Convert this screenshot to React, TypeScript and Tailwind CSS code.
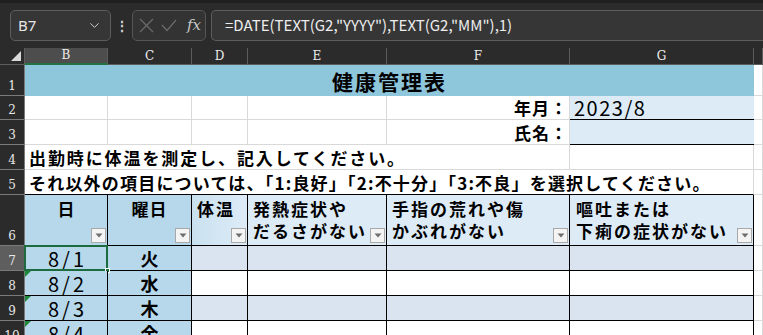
import { Fragment } from 'react'
import { ChevronDown } from 'lucide-react'

const jp = "font-['Noto_Sans_CJK_JP',sans-serif]"
const grid = 'border-r border-b border-[#d9d9d9]'
const tbl = 'border-r border-b border-black'

function FilterBtn() {
  return (
    <div className="absolute right-[1px] bottom-[2px] w-[15px] h-[15px] bg-[#f4f4f4] border border-[#a9a9a9] flex items-center justify-center">
      <svg width="8" height="5" viewBox="0 0 8 5">
        <path d="M0.5 0.5 L7.5 0.5 L4 4.5 Z" fill="#6e6e6e" />
      </svg>
    </div>
  )
}

function RowNum({ n, active }: { n: number; active?: boolean }) {
  return (
    <div className={`flex items-end justify-center pb-[2px] border-b border-r border-[#7a7a7a] text-[12px] leading-[14px] text-[#e8e8e8] font-['DejaVu_Serif',serif] ${active ? 'bg-[#5e5e5e]' : 'bg-[#2b2b2b]'}`}>
      {n}
    </div>
  )
}

function ColHead({ label, active }: { label: string; active?: boolean }) {
  return (
    <div className={`flex items-end justify-center pb-[1px] border-r border-[#5c5c5c] text-[12px] leading-[14px] text-[#ececec] font-['DejaVu_Serif',serif] ${active ? 'bg-[#4d4d4d] border-b-2 border-b-[#217346]' : 'border-b border-b-[#5c5c5c]'}`}>
      {label}
    </div>
  )
}

const days = [
  { d: '8/1', w: '火', shade: true, sel: true },
  { d: '8/2', w: '水', shade: false },
  { d: '8/3', w: '木', shade: true },
  { d: '8/4', w: '金', shade: false },
]

export default function App() {
  return (
    <div className="w-[763px] h-[335px] overflow-hidden bg-[#2b2b2b]">
      {/* formula bar */}
      <div className="h-[48px] border-t-[3px] border-[#1f1f1f] flex items-start pt-[7px]">
        <div className="ml-[10px] w-[101px] h-[31px] rounded-[5px] border border-[#5d5d5d] bg-[#363636] flex items-center pl-[7px] pr-[8px] justify-between">
          <span className="text-[15px] text-[#e6e6e6] font-['Noto_Sans',sans-serif]">B7</span>
          <ChevronDown size={15} color="#cfcfcf" strokeWidth={1.6} />
        </div>
        <div className="w-[21px] h-[31px] flex items-center justify-center text-[#cfcfcf] text-[14px] font-bold">⋮</div>
        <div className="w-[74px] h-[31px] rounded-[5px] border border-[#555] bg-[#333] flex items-center pl-[6px] gap-[7px]">
          <svg width="15" height="15" viewBox="0 0 15 15">
            <path d="M1 1 L14 14 M14 1 L1 14" stroke="#6b6b6b" strokeWidth="1.2" />
          </svg>
          <svg width="16" height="13" viewBox="0 0 16 13">
            <path d="M1 6 L6 11.5 L15 1" stroke="#6b6b6b" strokeWidth="1.2" fill="none" />
          </svg>
          <span className="text-[15px] italic text-[#c8c8c8] font-['DejaVu_Serif',serif] leading-none ml-[3px]">fx</span>
        </div>
        <div className="ml-[5px] flex-1 h-[31px] rounded-l-[5px] border border-r-0 border-[#5d5d5d] bg-[#363636] flex items-center pl-[13px]">
          <span className={`text-[15px] text-[#ededed] ${jp}`}>=DATE(TEXT(G2,"YYYY"),TEXT(G2,"MM"),1)</span>
        </div>
      </div>

      {/* sheet */}
      <div className="grid grid-cols-[25px_83px_84px_56px_139px_183px_184px_9px] grid-rows-[17px_31px_24px_25px_25px_25px_51px_25px_25px_25px_25px]">
        {/* column headers */}
        <div className="relative border-r border-b border-[#5c5c5c]">
          <svg className="absolute right-[3px] bottom-[3px]" width="10" height="10" viewBox="0 0 10 10">
            <path d="M10 0 L10 10 L0 10 Z" fill="#d9d9d9" />
          </svg>
        </div>
        <ColHead label="B" active />
        <ColHead label="C" />
        <ColHead label="D" />
        <ColHead label="E" />
        <ColHead label="F" />
        <ColHead label="G" />
        <ColHead label="" />

        {/* row 1 */}
        <RowNum n={1} />
        <div className={`col-span-6 bg-[#8ec6dc] flex items-center justify-center pt-[2px] text-[21px] leading-none font-bold tracking-[2px] text-black ${jp}`}>
          健康管理表
        </div>
        <div className={`bg-white ${grid}`} />

        {/* row 2 */}
        <RowNum n={2} />
        <div className={`bg-white ${grid}`} />
        <div className={`bg-white ${grid}`} />
        <div className={`bg-white ${grid}`} />
        <div className={`bg-white ${grid}`} />
        <div className={`bg-white ${grid} flex items-center justify-end pr-[1px] text-[17px] leading-none font-bold tracking-[1px] ${jp}`}>年月：</div>
        <div className={`bg-[#ddebf7] border-b border-black flex items-center pl-[4px] text-[20px] leading-none tracking-[1.5px] ${jp}`}>2023/8</div>
        <div className={`bg-white ${grid}`} />

        {/* row 3 */}
        <RowNum n={3} />
        <div className={`bg-white ${grid}`} />
        <div className={`bg-white ${grid}`} />
        <div className={`bg-white ${grid}`} />
        <div className={`bg-white ${grid}`} />
        <div className={`bg-white ${grid} flex items-center justify-end pr-[1px] text-[17px] leading-none font-bold tracking-[1px] ${jp}`}>氏名：</div>
        <div className="bg-[#ddebf7] border-b border-black" />
        <div className={`bg-white ${grid}`} />

        {/* row 4 */}
        <RowNum n={4} />
        <div className={`col-span-5 bg-white ${grid} flex items-center pl-[4px] whitespace-nowrap text-[17px] leading-none font-bold tracking-[1.9px] ${jp}`}>
          出勤時に体温を測定し、記入してください。
        </div>
        <div className={`bg-white ${grid}`} />
        <div className={`bg-white ${grid}`} />

        {/* row 5 */}
        <RowNum n={5} />
        <div className={`col-span-6 bg-white border-b border-black border-r border-r-[#d9d9d9] flex items-center pl-[4px] whitespace-nowrap text-[17px] leading-none font-bold tracking-[1.2px] ${jp}`}>
          それ以外の項目については、「1:良好」「2:不十分」「3:不良」を選択してください。
        </div>
        <div className={`bg-white ${grid}`} />

        {/* row 6: table header */}
        <RowNum n={6} />
        <div className={`relative bg-[#b6d8ea] ${tbl} text-center pt-[3px] text-[17px] leading-[22px] font-bold ${jp}`}>
          日
          <FilterBtn />
        </div>
        <div className={`relative bg-[#b6d8ea] ${tbl} text-center pt-[3px] text-[17px] leading-[22px] font-bold tracking-[1px] ${jp}`}>
          曜日
          <FilterBtn />
        </div>
        <div className={`relative bg-gradient-to-r from-[#c9e1ef] to-[#ddebf7] ${tbl} pl-[5px] pt-[3px] text-[17px] leading-[22px] font-bold tracking-[2px] ${jp}`}>
          体温
          <FilterBtn />
        </div>
        <div className={`relative bg-[#ddebf7] ${tbl} pl-[5px] pt-[3px] text-[17px] leading-[22px] font-bold tracking-[2px] ${jp}`}>
          発熱症状や<br />だるさがない
          <FilterBtn />
        </div>
        <div className={`relative bg-[#ddebf7] ${tbl} pl-[5px] pt-[3px] text-[17px] leading-[22px] font-bold tracking-[2px] ${jp}`}>
          手指の荒れや傷<br />かぶれがない
          <FilterBtn />
        </div>
        <div className={`relative bg-[#ddebf7] ${tbl} pl-[6px] pt-[3px] text-[17px] leading-[22px] font-bold tracking-[2px] ${jp}`}>
          嘔吐または<br />下痢の症状がない
          <FilterBtn />
        </div>
        <div className={`bg-white ${grid}`} />

        {/* data rows */}
        {days.map((r, i) => (
          <Fragment key={i}>
            <RowNum n={7 + i} active={r.sel} />
            <div className={`relative bg-[#b6d8ea] ${tbl} flex items-center justify-center pt-[1px] pl-[3px] text-[20px] leading-none tracking-[3px] ${jp}`}>
              {r.d}
              {r.sel ? (
                <>
                  <div className="absolute left-[-1px] top-[-1px] right-[-1px] bottom-[-1px] border-2 border-[#1d6b3e]" />
                  <div className="absolute right-[-3px] bottom-[-3px] w-[5px] h-[5px] bg-[#1d6b3e] border border-white" />
                </>
              ) : (
                <svg className="absolute left-0 top-0" width="6" height="6" viewBox="0 0 6 6">
                  <path d="M0 0 L6 0 L0 6 Z" fill="#1f8a3c" />
                </svg>
              )}
            </div>
            <div className={`bg-[#b6d8ea] ${tbl} flex items-center justify-center text-[18px] leading-none font-bold ${jp}`}>
              {r.w}
            </div>
            <div className={`${r.shade ? 'bg-[#dae3f0]' : 'bg-white'} ${tbl}`} />
            <div className={`${r.shade ? 'bg-[#dae3f0]' : 'bg-white'} ${tbl}`} />
            <div className={`${r.shade ? 'bg-[#dae3f0]' : 'bg-white'} ${tbl}`} />
            <div className={`${r.shade ? 'bg-[#dae3f0]' : 'bg-white'} ${tbl}`} />
            <div className={`bg-white ${grid}`} />
          </Fragment>
        ))}
      </div>
    </div>
  )
}
